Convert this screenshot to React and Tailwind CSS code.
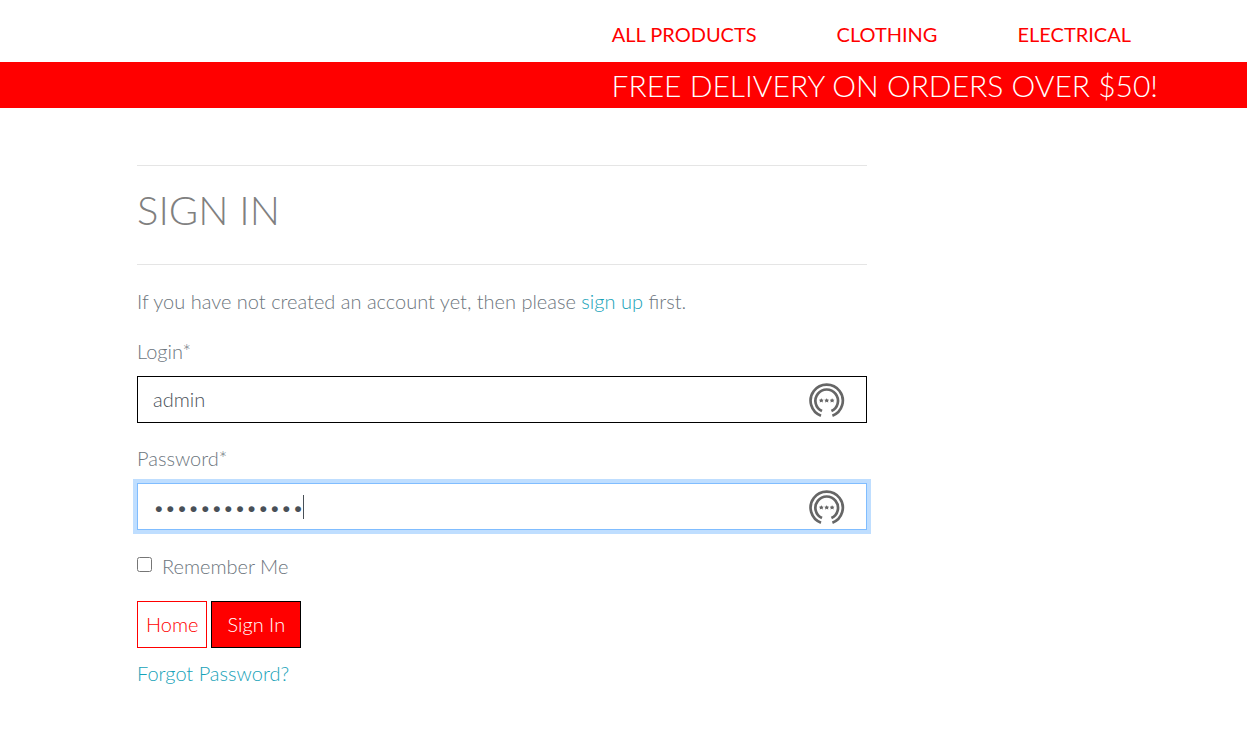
import { useState } from "react";

const LINKS = ["All Products", "Clothing", "Electrical"];
const DOT_PITCH = 11.4;
const STAR_OFFSETS = [0, 5.4, 10.8];

function KeyIcon() {
  return (
    <svg
      viewBox="0 0 36 36"
      className="pointer-events-none absolute top-1.5 right-[22px] size-9"
      fill="none"
      stroke="#666666"
      strokeWidth="2.7"
      aria-hidden="true"
    >
      <path d="M12 33.7A16.1 16.1 0 1 1 23.4 33.7" />
      <path d="M13 29.1A11.3 11.3 0 1 1 22.4 29.1" />
      <g fill="#666666" stroke="none">
        {STAR_OFFSETS.map((x) => (
          <path
            key={x}
            transform={`translate(${x} 0)`}
            d="M12.3 16.2l.8 1.4 1.5.2-1 1.1.3 1.5-1.6-.7-1.6.7.3-1.5-1-1.1 1.5-.2z"
          />
        ))}
      </g>
    </svg>
  );
}

function Field({ id, label, type, value, onChange, autoFocus }) {
  return (
    <div className="mb-[19px]">
      <label htmlFor={id} className="mb-[9px] block leading-8">
        {label}*
      </label>
      <div className="relative">
        <input
          id={id}
          type={type}
          value={value}
          autoFocus={autoFocus}
          onChange={(e) => onChange(e.target.value)}
          className="peer block h-[47px] w-full border border-black bg-white pr-16 pb-0.5 pl-[15px] text-[#495057] outline-none focus:border-[#80bdff] focus:ring-4 focus:ring-[#bfdeff] [&[type=password]]:pb-0 [&[type=password]]:caret-transparent"
        />
        {type === "password" && (
          <span
            className="pointer-events-none absolute top-3 hidden h-6 w-px bg-[#495057] peer-focus:block"
            style={{ left: Math.round(18 + value.length * DOT_PITCH) }}
          />
        )}
        <KeyIcon />
      </div>
    </div>
  );
}

export default function App() {
  const [login, setLogin] = useState("admin");
  const [password, setPassword] = useState("correcthorse1");

  return (
    <div className="min-h-screen bg-white font-['Lato',sans-serif] text-xl font-light text-[#6c757d]">
      <nav className="flex h-[62px] items-center justify-end gap-20 pt-1.5 pr-[116px] font-normal text-[#ff0000] uppercase">
        {LINKS.map((l) => (
          <a key={l} href="#">
            {l}
          </a>
        ))}
      </nav>
      <div className="bg-[#ff0000] pr-[89px] text-right text-3xl leading-[46px] text-white uppercase">
        Free delivery on orders over $50!
      </div>
      <main className="mr-[380px] ml-[137px] pt-[57px]">
        <hr className="border-black/10" />
        <h1 className="pt-3.5 pb-6 text-[40px] leading-[60px] text-[#808080] uppercase">
          Sign In
        </h1>
        <hr className="border-black/10" />
        <p className="mt-5 mb-[18px] leading-8">
          If you have not created an account yet, then please{" "}
          <a href="#" className="text-[#17a2b8]">
            sign up
          </a>{" "}
          first.
        </p>
        <form onSubmit={(e) => e.preventDefault()}>
          <Field id="login" label="Login" type="text" value={login} onChange={setLogin} />
          <Field
            id="password"
            label="Password"
            type="password"
            value={password}
            onChange={setPassword}
            autoFocus
          />
          <label className="mt-5 flex w-fit items-center gap-2.5 leading-8">
            <input type="checkbox" className="mb-1 size-[15px]" />
            Remember Me
          </label>
          <div className="mt-[19px] flex gap-1">
            <a
              href="#"
              className="flex h-[47px] items-center border border-[#ff0000] px-2 pb-0.5 text-[#ff0000]"
            >
              Home
            </a>
            <button
              type="submit"
              className="h-[47px] border border-black bg-[#ff0000] px-[15px] pb-0.5 text-white"
            >
              Sign In
            </button>
          </div>
          <a href="#" className="mt-[9px] inline-block leading-8 text-[#17a2b8]">
            Forgot Password?
          </a>
        </form>
      </main>
    </div>
  );
}
